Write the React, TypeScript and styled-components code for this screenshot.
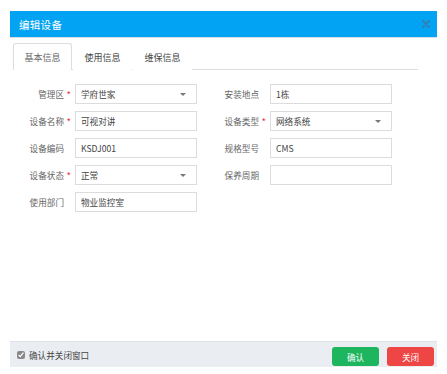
import React, { useState } from "react";
import styled, { createGlobalStyle } from "styled-components";

type Field = {
  label: string;
  value: string;
  required?: boolean;
  select?: boolean;
};

const rows: [Field, Field | null][] = [
  [
    { label: "管理区", value: "学府世家", required: true, select: true },
    { label: "安装地点", value: "1栋" },
  ],
  [
    { label: "设备名称", value: "可视对讲", required: true },
    { label: "设备类型", value: "网络系统", required: true, select: true },
  ],
  [
    { label: "设备编码", value: "KSDJ001" },
    { label: "规格型号", value: "CMS" },
  ],
  [
    { label: "设备状态", value: "正常", required: true, select: true },
    { label: "保养周期", value: "" },
  ],
  [{ label: "使用部门", value: "物业监控室" }, null],
];

const tabs = ["基本信息", "使用信息", "维保信息"];

const FormField: React.FC<{ field: Field }> = ({ field }) => (
  <FieldCell>
    <Label>
      {field.label}
      <Star>{field.required ? "*" : ""}</Star>
    </Label>
    <InputBox>
      <InputText>{field.value}</InputText>
      {field.select && <Caret />}
    </InputBox>
  </FieldCell>
);

const App: React.FC = () => {
  const [active, setActive] = useState(0);
  const [closeOnOk, setCloseOnOk] = useState(true);

  return (
    <>
      <GlobalStyle />
      <Dialog>
        <Header>
          <Title>编辑设备</Title>
          <CloseBtn aria-label="close">
            <svg width="8" height="8" viewBox="0 0 8 8">
              <path d="M1 1 L7 7 M7 1 L1 7" stroke="#3181b8" strokeWidth="1.8" strokeLinecap="round" />
            </svg>
          </CloseBtn>
        </Header>

        <TabBar>
          {tabs.map((t, i) => (
            <Tab key={t} $active={i === active} onClick={() => setActive(i)}>
              {t}
            </Tab>
          ))}
        </TabBar>

        <Form>
          {rows.map(([a, b], i) => (
            <React.Fragment key={i}>
              <FormField field={a} />
              {b ? <FormField field={b} /> : <div />}
            </React.Fragment>
          ))}
        </Form>

        <Footer>
          <CheckLabel>
            <CheckBox
              type="checkbox"
              checked={closeOnOk}
              onChange={() => setCloseOnOk(!closeOnOk)}
            />
            确认并关闭窗口
          </CheckLabel>
          <Buttons>
            <Button $color="#1db55e">确认</Button>
            <Button $color="#ee4545">关闭</Button>
          </Buttons>
        </Footer>
      </Dialog>
    </>
  );
};

export default App;

/* ---------------- Styled Components ---------------- */

const GlobalStyle = createGlobalStyle`
  html, body {
    margin: 0;
    padding: 0;
    background: #fff;
  }
  body {
    font-family: "Noto Sans CJK SC", "Liberation Sans", sans-serif;
    color: #333;
  }
`;

const Dialog = styled.div`
  margin: 11px 0 0 10px;
  width: 427px;
  height: 356px;
  display: flex;
  flex-direction: column;
  background: #fff;
`;

const Header = styled.div`
  height: 26px;
  background: #02a3f3;
  border-bottom: 1px solid #d8dde2;
  display: flex;
  align-items: center;
  justify-content: space-between;
  padding: 0 7px 0 9px;
  flex-shrink: 0;
`;

const Title = styled.div`
  color: #fff;
  font-size: 10.5px;
  letter-spacing: 0.3px;
`;

const CloseBtn = styled.span`
  display: flex;
  align-items: center;
  cursor: pointer;
`;

const TabBar = styled.div`
  display: flex;
  margin: 5px 19px 0 3px;
  height: 26px;
  border-bottom: 1px solid #dddddd;
`;

const Tab = styled.div<{ $active: boolean }>`
  width: 57px;
  margin-right: 1px;
  display: flex;
  align-items: center;
  justify-content: center;
  font-size: 9px;
  color: ${(p) => (p.$active ? "#666" : "#444")};
  background: #fff;
  border: 1px solid ${(p) => (p.$active ? "#dddddd" : "transparent")};
  border-bottom: none;
  border-radius: 3px 3px 0 0;
  margin-bottom: -1px;
  cursor: pointer;
`;

const Form = styled.div`
  display: grid;
  grid-template-columns: 195px 195px;
  row-gap: 7px;
  margin-top: 14px;
`;

const FieldCell = styled.div`
  display: flex;
  align-items: center;
  height: 20px;
`;

const Label = styled.div`
  width: 65px;
  display: flex;
  justify-content: flex-end;
  align-items: center;
  font-size: 8.6px;
  color: #666;
  white-space: nowrap;
`;

const Star = styled.span`
  width: 11px;
  padding-left: 3px;
  box-sizing: border-box;
  color: #f01818;
  font-size: 9px;
  font-family: "Liberation Sans", sans-serif;
`;

const InputBox = styled.div`
  width: 122px;
  height: 20px;
  box-sizing: border-box;
  border: 1px solid #dcdcdc;
  display: flex;
  align-items: center;
  justify-content: space-between;
  padding: 0 10px 0 5px;
  background: #fff;
`;

const InputText = styled.span`
  font-size: 8.6px;
  color: #444;
  white-space: nowrap;
`;

const Caret = styled.span`
  width: 0;
  height: 0;
  border-left: 3px solid transparent;
  border-right: 3px solid transparent;
  border-top: 3px solid #777;
`;

const Footer = styled.div`
  margin-top: auto;
  height: 26px;
  box-sizing: border-box;
  background: #eaeef2;
  border-top: 1px solid #dde3e9;
  display: flex;
  align-items: center;
  justify-content: space-between;
  padding: 0 3px 1px 7px;
`;

const CheckLabel = styled.label`
  display: flex;
  align-items: center;
  gap: 4px;
  font-size: 8.6px;
  color: #444;
  margin-top: 2px;
`;

const CheckBox = styled.input`
  width: 8px;
  height: 8px;
  margin: 0;
  accent-color: #888;
`;

const Buttons = styled.div`
  display: flex;
  gap: 8px;
  align-self: flex-end;
`;

const Button = styled.button<{ $color: string }>`
  width: 47px;
  height: 19px;
  border: none;
  border-radius: 3px;
  background: ${(p) => p.$color};
  color: #fff;
  font-size: 8.6px;
  font-family: "Noto Sans CJK SC", sans-serif;
  padding: 0;
  cursor: pointer;
`;
